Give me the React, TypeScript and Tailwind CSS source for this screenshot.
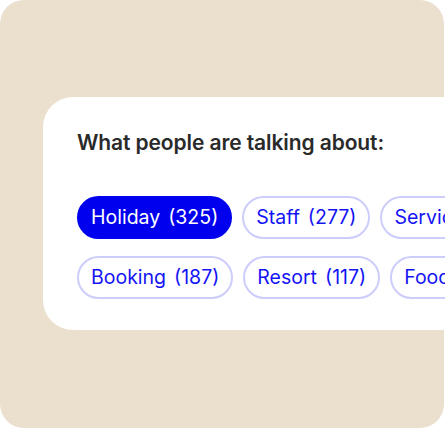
const topics = [
  [
    { label: 'Holiday', count: 325, active: true },
    { label: 'Staff', count: 277 },
    { label: 'Service', count: 254 },
  ],
  [
    { label: 'Booking', count: 187 },
    { label: 'Resort', count: 117 },
    { label: 'Food', count: 98 },
  ],
]

export default function App() {
  return (
    <div className="w-[445px] h-[429px] overflow-hidden bg-white font-['Inter',sans-serif]">
      <div className="relative w-[444px] h-[428px] rounded-[24px] bg-[#eae0cd] pt-[97px] pl-[43px]">
        {/* Topics card */}
        <div className="w-[520px] h-[233px] rounded-l-[30px] bg-white pl-[34px] pt-[32px]">
          <h2 className="text-[21px] font-semibold text-[#2a2a2a] leading-7 tracking-[-0.1px]">
            What people are talking about:
          </h2>
          <div className="mt-[39px] flex flex-col gap-[17px]">
            {topics.map((row, i) => (
              <div key={i} className="flex gap-[10px] whitespace-nowrap">
                {row.map((t) => (
                  <span
                    key={t.label}
                    className={`flex h-[43px] items-center gap-[8px] rounded-full px-[12px] text-[19.5px] ${
                      t.active
                        ? 'bg-[#0000ef] text-white border-2 border-[#0000ef]'
                        : 'border-2 border-[#cdcdfb] text-[#1414f5]'
                    }`}
                  >
                    <span>{t.label}</span>
                    <span>({t.count})</span>
                  </span>
                ))}
              </div>
            ))}
          </div>
        </div>
      </div>
    </div>
  )
}
